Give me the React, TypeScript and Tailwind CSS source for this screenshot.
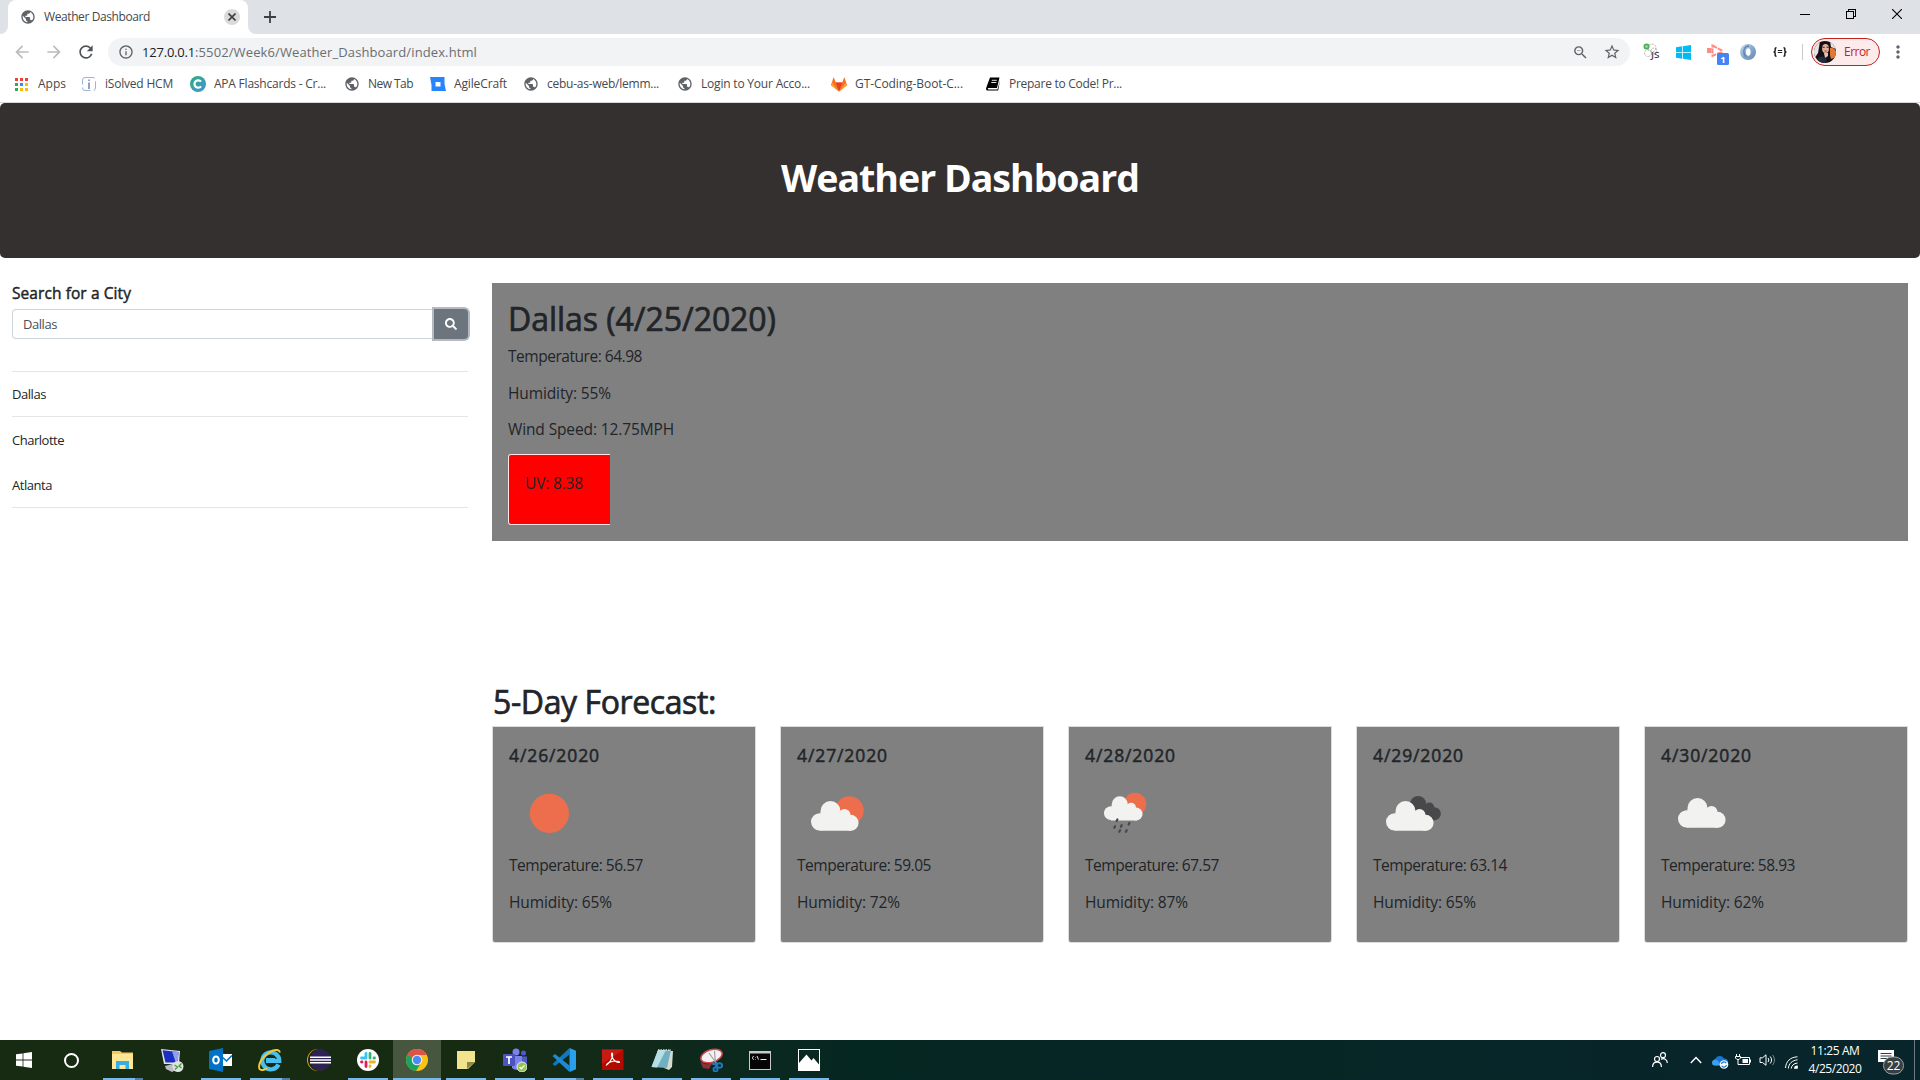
import React, { useLayoutEffect, useRef } from "react";
import {
  MdArrowBack,
  MdArrowForward,
  MdInfoOutline,
  MdMoreVert,
  MdPublic,
  MdRefresh,
  MdStarBorder,
  MdZoomOut,
} from "react-icons/md";
import { FaSearch } from "react-icons/fa";

/* Tracks its text so that it fills exactly `w` pixels on one line. */
function Label({ w, className = "", children }: { w: number; className?: string; children: string }) {
  const ref = useRef<HTMLSpanElement>(null);
  useLayoutEffect(() => {
    const el = ref.current;
    if (!el) return;
    el.style.letterSpacing = "0px";
    const natural = el.getBoundingClientRect().width;
    el.style.letterSpacing = `${(w - natural) / children.length}px`;
  }, [w, children]);
  return (
    <span ref={ref} className={`inline-block shrink-0 whitespace-nowrap ${className}`}>
      {children}
    </span>
  );
}

/* ---------- browser chrome ---------- */

function TabStrip() {
  return (
    <div className="flex h-[34px] items-end bg-[#dee1e6]">
      <div className="h-2 w-2 shrink-0 bg-white">
        <div className="h-2 w-2 rounded-br-lg bg-[#dee1e6]" />
      </div>
      <div className="flex h-[34px] w-[240px] items-center rounded-t-lg bg-white pl-3 pr-2">
        <MdPublic className="size-4 text-[#5f6368]" />
        <Label w={106} className="ml-2 text-[12px] leading-4 text-[#45494d]">Weather Dashboard</Label>
        <div className="ml-auto flex size-4 items-center justify-center rounded-full bg-[#dadada]">
          <svg viewBox="0 0 8 8" className="size-2 stroke-[#3c4043]" strokeWidth="1.6">
            <path d="M.5.5l7 7M7.5.5l-7 7" />
          </svg>
        </div>
      </div>
      <div className="h-2 w-2 shrink-0 bg-white">
        <div className="h-2 w-2 rounded-bl-lg bg-[#dee1e6]" />
      </div>
      <svg viewBox="0 0 12 12" className="mb-[11px] ml-2 size-3 stroke-[#3c4043]" strokeWidth="1.8">
        <path d="M6 0v12M0 6h12" />
      </svg>
      <div className="mb-[15px] ml-auto mr-[18px] flex items-center gap-9">
        <svg viewBox="0 0 10 10" className="size-[10px]" shapeRendering="crispEdges">
          <rect y="5" width="10" height="1" />
        </svg>
        <svg viewBox="0 0 10 10" className="size-[10px] fill-none stroke-black" shapeRendering="crispEdges">
          <path d="M.5 2.5h7v7h-7zM2.5 2V.5h7v7H8" />
        </svg>
        <svg viewBox="0 0 10 10" className="size-[10px] stroke-black" strokeWidth="1.1">
          <path d="M0 0l10 10M10 0L0 10" />
        </svg>
      </div>
    </div>
  );
}

function WindowsLogo({ className }: { className: string }) {
  return (
    <svg viewBox="0 0 16 16" className={className}>
      <path d="M0 2.3L6.6 1.4v6.2H0zM7.4 1.3L16 0v7.6H7.4zM0 8.4h6.6v6.2L0 13.7zM7.4 8.4H16V16l-8.6-1.3z" />
    </svg>
  );
}

function Extensions() {
  return (
    <div className="flex items-center">
      <svg viewBox="0 0 18 18" className="ml-[13px] size-[18px] shrink-0">
        <g fill="none" stroke="#b5b5b5" strokeDasharray="2 1">
          <circle cx="9" cy="5" r="4" />
          <circle cx="5" cy="10" r="3.500" />
          <circle cx="11" cy="8" r="3" />
        </g>
        <circle cx="3.500" cy="3.500" r="3" fill="#4caf50" />
        <circle cx="3.500" cy="3.500" r="1.300" fill="#a5dba7" />
        <text x="8" y="14.500" fontSize="9.500" fontWeight="600" fill="#444" fontFamily="Open Sans, sans-serif" textLength="8.500" lengthAdjust="spacingAndGlyphs">JS</text>
      </svg>
      <WindowsLogo className="ml-[15px] size-[15px] shrink-0 fill-[#00bcf2]" />
      <svg viewBox="0 0 23 22" className="ml-4 mt-[6px] h-[22px] w-[23px] shrink-0">
        <rect x="0" y="4" width="4.500" height="5" fill="#ff8a86" />
        <path d="M5.500 1.500l9 4.800v2l-9 3.400z" fill="none" stroke="#ff8a86" strokeWidth="2" strokeDasharray="5 1" />
        <rect x="10" y="9" width="12" height="12" rx="1.500" fill="#4285f4" />
        <text x="16" y="18.500" fontSize="9.500" fontWeight="700" textAnchor="middle" fill="#fff" fontFamily="Open Sans, sans-serif">1</text>
      </svg>
      <svg viewBox="0 0 16 16" className="ml-[10px] size-4 shrink-0">
        <defs>
          <linearGradient id="swirl" x1="0" y1="0" x2="1" y2="1">
            <stop offset="0" stopColor="#c9dcee" />
            <stop offset=".5" stopColor="#8aa9cc" />
            <stop offset="1" stopColor="#5f86b4" />
          </linearGradient>
        </defs>
        <circle cx="8" cy="8" r="8" fill="url(#swirl)" />
        <path d="M9 2C4 2 2 8 6 13" stroke="#5f86b4" strokeWidth="1.400" fill="none" />
        <ellipse cx="8.300" cy="8" rx="2.300" ry="3.800" fill="#fff" />
      </svg>
      <svg viewBox="0 0 14 10" className="ml-[17px] h-[10px] w-[14px] shrink-0 fill-none stroke-[#222]" strokeWidth="1.500">
        <path d="M3.5.8C1.8.8 2.2 2 2.2 3.2S1.5 5 .5 5c1 0 1.700.600 1.700 1.800s-.4 2.400 1.300 2.400M10.500.8c1.700 0 1.300 1.200 1.300 2.400S12.500 5 13.500 5c-1 0-1.700.600-1.700 1.800s.4 2.400-1.300 2.400" />
        <path d="M4.800 3.500h4.400M4.800 5.500h4.400" strokeWidth="1.200" />
      </svg>
      <div className="ml-[15px] h-4 w-px bg-[#c8cacd]" />
    </div>
  );
}

function Avatar() {
  return (
    <svg viewBox="0 0 22 22" className="size-[22px] shrink-0">
      <clipPath id="face"><circle cx="11" cy="11" r="11" /></clipPath>
      <g clipPath="url(#face)">
        <rect width="22" height="22" fill="#14101a" />
        <path d="M0 0h6L4 12l-4 6z" fill="#e9e4e4" />
        <path d="M16 7c3-1 6 2 6 4v5l-5 2-1-4z" fill="#e07a35" />
        <path d="M16 0h6v8l-5-2z" fill="#efe3df" />
        <ellipse cx="11.500" cy="7.500" rx="3.400" ry="4.500" fill="#e2b19b" />
        <path d="M8.500 6.300h2.200M12.500 6.300h2.200" stroke="#3a2226" strokeWidth="1.100" />
        <path d="M10.500 10h2.200" stroke="#a3394a" />
        <path d="M10 12h4l0 3-3 2z" fill="#e8c3b2" />
        <path d="M3 19c3-5 7-4 10 0l-2 3H5z" fill="#232c38" />
      </g>
    </svg>
  );
}

function Toolbar() {
  return (
    <div className="flex h-9 shrink-0 items-center pl-3">
      <MdArrowBack className="size-5 text-[#babcbe]" />
      <MdArrowForward className="ml-3 size-5 text-[#babcbe]" />
      <MdRefresh className="ml-3 size-5 text-[#50545a]" />
      <div className="ml-3 flex h-7 w-[1522px] items-center rounded-full bg-[#f1f3f4] pl-[10px] pr-[9px]">
        <MdInfoOutline className="size-4 text-[#5f6368]" />
        <Label w={53} className="ml-2 text-[13px] leading-5 text-[#202124]">127.0.0.1</Label>
        <Label w={282} className="text-[13px] leading-5 text-[#6a6e73]">:5502/Week6/Weather_Dashboard/index.html</Label>
        <MdZoomOut className="ml-auto size-[17px] text-[#5f6368]" />
        <MdStarBorder className="ml-[14px] size-[18px] text-[#5f6368]" />
      </div>
      <Extensions />
      <div className="ml-2 flex h-7 w-[69px] items-center rounded-full border border-[#c5221f] bg-[#fcebea] pl-[2px]">
        <Avatar />
        <Label w={26} className="ml-2 text-[12px] leading-5 text-[#c5221f]">Error</Label>
      </div>
      <MdMoreVert className="ml-2 size-5 text-[#5f6368]" />
    </div>
  );
}

const APP_DOTS = [
  "#ea4335", "#ea4335", "#ea4335",
  "#34a853", "#4285f4", "#fbbc05",
  "#34a853", "#fbbc05", "#fbbc05",
];

function Bookmarks() {
  const globe = <MdPublic className="size-4 text-[#5f6368]" />;
  const items = [
    {
      text: "Apps", w: 28, slot: "w-[68px]",
      icon: (
        <svg viewBox="0 0 16 16" className="mr-px size-4" shapeRendering="crispEdges">
          {APP_DOTS.map((c, i) => (
            <rect key={i} x={2 + (i % 3) * 5} y={2 + Math.floor(i / 3) * 5} width="3" height="3" fill={c} />
          ))}
        </svg>
      ),
    },
    {
      text: "iSolved HCM", w: 68, slot: "w-[109px]",
      icon: (
        <svg viewBox="0 0 16 16" className="size-4 fill-none stroke-[#9db4d8]">
          <rect x="1.500" y="1.500" width="13" height="13" rx="2.500" strokeDasharray="10 3" />
          <path d="M8 6.500V13M8 3.500v1.500" stroke="#6a83b5" strokeWidth="1.500" />
        </svg>
      ),
    },
    {
      text: "APA Flashcards - Cr...", w: 112, slot: "w-[154px]",
      icon: (
        <svg viewBox="0 0 16 16" className="size-4">
          <defs>
            <linearGradient id="cram" x1="0" y1="0" x2="1" y2="1">
              <stop offset=".2" stopColor="#2fa98c" />
              <stop offset="1" stopColor="#4592dd" />
            </linearGradient>
          </defs>
          <circle cx="8" cy="8" r="8" fill="url(#cram)" />
          <path d="M11 5.600A3.700 3.700 0 1 0 11 10.400" fill="none" stroke="#fff" strokeWidth="2.200" />
        </svg>
      ),
    },
    { text: "New Tab", w: 45, slot: "w-[86px]", icon: globe },
    {
      text: "AgileCraft", w: 53, slot: "w-[93px]",
      icon: (
        <svg viewBox="0 0 16 16" className="size-4">
          <path d="M1 1h13.500v7L16 15H1.500V9L0 1z" fill="#2684ff" />
          <rect x="5.500" y="6" width="5" height="4.500" fill="#fff" />
        </svg>
      ),
    },
    { text: "cebu-as-web/lemm...", w: 112, slot: "w-[154px]", icon: globe },
    { text: "Login to Your Acco...", w: 109, slot: "w-[154px]", icon: globe },
    {
      text: "GT-Coding-Boot-C...", w: 108, slot: "w-[154px]",
      icon: (
        <svg viewBox="0 0 16 16" className="size-4">
          <path d="M0 9.200L2.600 1l2.200 5.500h6.400L13.400 1 16 9.200 8 15.500z" fill="#fc6d26" />
          <path d="M4.800 6.500h6.400L8 15.500z" fill="#e24329" />
          <path d="M0 9.200l1-2.700L8 15.500zM16 9.200l-1-2.700L8 15.500z" fill="#fca326" />
        </svg>
      ),
    },
    {
      text: "Prepare to Code! Pr...", w: 113, slot: "w-[154px]",
      icon: (
        <svg viewBox="0 0 16 16" className="size-4">
          <path d="M5 1.500h9.500L12 12H3.500c-1 0-1 1.500 0 1.500h9L15 4l-1.800 10.500H2.500C.8 14.500.8 12.500 1.500 11z" />
          <path d="M6.800 4.300h5M6.300 6.500h5" stroke="#fff" strokeWidth=".9" />
        </svg>
      ),
    },
  ];
  return (
    <div className="flex h-[32px] shrink-0 items-center pb-1 pl-3">
      {items.map((b) => (
        <div key={b.text} className={`flex shrink-0 items-center pl-px ${b.slot}`}>
          {b.icon}
          <Label w={b.w} className="ml-2 text-[12px] leading-4 text-[#45494d]">{b.text}</Label>
        </div>
      ))}
    </div>
  );
}

/* ---------- weather drawings ---------- */

function Cloud({ x, y, s = 1, fill = "#f2f2f0" }: { x: number; y: number; s?: number; fill?: string }) {
  return (
    <g transform={`translate(${x} ${y}) scale(${s})`} fill={fill}>
      <circle cx="8.600" cy="20.800" r="8.600" />
      <circle cx="19.500" cy="10" r="10" />
      <circle cx="33.500" cy="14" r="6" />
      <circle cx="39.600" cy="21.800" r="8" />
      <path d="M9.500 11h27l4 5v13.800H8.600z" />
    </g>
  );
}

const DROPS = [[32, 53.300], [29.700, 60], [36.300, 59], [44, 56.700], [34.700, 64], [41.300, 64]];

function Sky({ kind }: { kind: string }) {
  return (
    <svg viewBox="0 0 80 80" className="size-20">
      {kind === "clear" && <circle cx="40.400" cy="46.300" r="19.600" fill="#ec6e4c" />}
      {kind === "few" && (
        <>
          <circle cx="52.400" cy="43.500" r="14.300" fill="#ec6e4c" />
          <Cloud x={14} y={34} />
        </>
      )}
      {kind === "rain" && (
        <>
          <circle cx="50" cy="37" r="11.200" fill="#ec6e4c" />
          <Cloud x={19} y={29.300} s={0.81} />
          {DROPS.map(([x, y], i) => (
            <path key={i} d={`M${x + 0.4} ${y - 0.8}l-.8 1.600`} stroke="#48484a" strokeWidth="2.200" strokeLinecap="round" />
          ))}
        </>
      )}
      {kind === "broken" && (
        <>
          <Cloud x={29.300} y={29} s={0.81} fill="#48484a" />
          <Cloud x={13} y={34} />
        </>
      )}
      {kind === "scattered" && <Cloud x={17} y={31} />}
    </svg>
  );
}

/* ---------- page ---------- */

const FORECAST = [
  { date: "4/26/2020", kind: "clear", temp: "56.57", hum: "65%" },
  { date: "4/27/2020", kind: "few", temp: "59.05", hum: "72%" },
  { date: "4/28/2020", kind: "rain", temp: "67.57", hum: "87%" },
  { date: "4/29/2020", kind: "broken", temp: "63.14", hum: "65%" },
  { date: "4/30/2020", kind: "scattered", temp: "58.93", hum: "62%" },
];

function Sidebar() {
  return (
    <aside className="w-[456px] shrink-0">
      <div className="flex h-[26px] items-start">
        <Label w={119} className="text-[15.5px] leading-5 [-webkit-text-stroke:0.45px_#212529]">Search for a City</Label>
      </div>
      <div className="flex h-[30px]">
        <div className="flex w-[422px] items-center rounded-l border border-r-0 border-[#ced4da] pl-[10px]">
          <Label w={34} className="text-[13px] leading-5 text-[#495057]">Dallas</Label>
        </div>
        <button className="flex w-[34px] items-center justify-center rounded-r bg-[#6c757d] shadow-[0_0_0_2px_#b5babe]">
          <FaSearch className="size-3 text-white" />
        </button>
      </div>
      <div className="mt-8 flex h-[45px] items-center border-t border-[#e5e5e5]">
        <Label w={34} className="text-[13px] leading-5">Dallas</Label>
      </div>
      <div className="flex h-[47px] items-center border-t border-[#e5e5e5]">
        <Label w={52} className="text-[13px] leading-5">Charlotte</Label>
      </div>
      <div className="flex h-[45px] items-center border-b border-[#e5e5e5]">
        <Label w={40} className="text-[13px] leading-5">Atlanta</Label>
      </div>
    </aside>
  );
}

function Page() {
  return (
    <div className="h-[937px] shrink-0 text-[#212529]">
      <header className="flex h-[155px] justify-center rounded-[5px] bg-[#353030] pt-[53px]">
        <h1 className="text-[37.500px] font-bold leading-[44px] text-white">
          <Label w={358}>Weather Dashboard</Label>
        </h1>
      </header>
      <div className="flex pl-3 pt-[25px]">
        <Sidebar />
        <main className="ml-6 w-[1416px]">
          <section className="h-[258px] bg-[#808080] pl-4 pt-4 text-[15.5px]">
            <h2 className="text-[32px] leading-[39px] [-webkit-text-stroke:0.7px_#212529]">
              <Label w={268}>Dallas (4/25/2020)</Label>
            </h2>
            <p className="h-[36.5px] leading-[37px]"><Label w={134}>Temperature: 64.98</Label></p>
            <p className="h-[36.5px] leading-[37px]"><Label w={103}>Humidity: 55%</Label></p>
            <p className="h-[36.5px] leading-[37px]"><Label w={166}>Wind Speed: 12.75MPH</Label></p>
            <div className="mt-[6.5px] h-[71px] w-[102px] rounded-l-[3px] border-y border-l border-white/90 bg-[#ff0000] pl-4 pt-4 leading-6">
              <Label w={58}>UV: 8.38</Label>
            </div>
          </section>
          <section className="pl-px pt-[141px]">
            <h2 className="h-[45px] text-[32px] leading-[39px] [-webkit-text-stroke:0.7px_#212529]">
              <Label w={223}>5-Day Forecast:</Label>
            </h2>
            <div className="flex gap-[26px]">
              {FORECAST.map((d) => (
                <article key={d.date} className="h-[215px] w-[262px] rounded-b-[2px] bg-[#808080] pl-4 pt-4 text-[15.5px] shadow-[0_0_0_1px_#dcdcdc]">
                  <h3 className="text-[17.500px] leading-6 [-webkit-text-stroke:0.5px_#212529]"><Label w={91}>{d.date}</Label></h3>
                  <Sky kind={d.kind} />
                  <p className="h-[36.5px] leading-[37px]"><Label w={134}>{`Temperature: ${d.temp}`}</Label></p>
                  <p className="h-[36.5px] leading-[37px]"><Label w={103}>{`Humidity: ${d.hum}`}</Label></p>
                </article>
              ))}
            </div>
          </section>
        </main>
      </div>
    </div>
  );
}

/* ---------- taskbar ---------- */

const art: Record<string, React.ReactNode> = {
  explorer: (
    <>
      <path d="M1 3h8l2 1.500h11V21H1z" fill="#f5c95b" />
      <path d="M1 6h21v15H1z" fill="#ffe596" />
      <path d="M5 21v-8h13v8h-3.500v-4h-6v4z" fill="#34aee3" />
    </>
  ),
  remote: (
    <>
      <path d="M5 18l11-3 6 4-10 5-6-3z" fill="#b9bcc0" />
      <path d="M1 1l19 2-1 13-15 0z" fill="#dfe3ea" />
      <path d="M2.500 2.200l16 1.800-.8 10.500-12.200 0z" fill="#1a2fc0" />
      <path d="M12 3.300l6.500.7-.8 10.500h-2z" fill="#8f9fee" />
      <circle cx="18" cy="18.500" r="5.500" fill="#dfe5dc" />
      <path d="M14.500 17l3 2-2.500 2.500M21.500 15.500L19 18l2.500 2" fill="none" stroke="#3f9b3f" strokeWidth="1.300" />
    </>
  ),
  outlook: (
    <>
      <path d="M12 6h11v12H12z" fill="#fff" />
      <path d="M12 8l5.500 5L23 7.500" fill="none" stroke="#0072c6" strokeWidth="1.600" />
      <path d="M0 3l14-3v24L0 21z" fill="#0072c6" />
      <ellipse cx="7" cy="12" rx="2.800" ry="3.600" fill="none" stroke="#fff" strokeWidth="2" />
    </>
  ),
  ie: (
    <>
      <path d="M20.500 16.500A8.500 8.500 0 1 1 21.300 12.800H8" fill="none" stroke="#49bff0" strokeWidth="4.200" />
      <path d="M8 10.500h9" stroke="#49bff0" strokeWidth="1" />
      <path d="M22 4.500C20-1 11 3 5 10c-5 6-5.500 13 0 12 1.500-.2 3-1 4-2" fill="none" stroke="#f2c832" strokeWidth="2" />
    </>
  ),
  eclipse: (
    <>
      <circle cx="11" cy="12" r="11" fill="#f7941e" />
      <circle cx="12" cy="12" r="11" fill="#182a12" />
      <circle cx="13.500" cy="12" r="10.500" fill="#2c2255" />
      <path d="M3 9.200h21M3 12h21M3 14.800h21" stroke="#fff" strokeWidth="1.500" />
    </>
  ),
  slack: (
    <>
      <circle cx="12" cy="12" r="11" fill="#fff" />
      <g strokeWidth="2.800" strokeLinecap="round">
        <path d="M10 5.500v4.500M5.500 10H10" stroke="#36c5f0" />
        <path d="M14 5.500V10M18.500 10h-.5" stroke="#2eb67d" />
        <path d="M14 14h4.500M14 18.500V18" stroke="#ecb22e" />
        <path d="M10 14v4.500M5.500 14H6" stroke="#e01e5a" />
      </g>
    </>
  ),
  chrome: (
    <>
      <circle cx="12" cy="12" r="11" fill="#fbc116" />
      <path d="M12 12L2.500 6.500A11 11 0 0 0 11 23l5.500-9z" fill="#1aa260" />
      <path d="M12 12L2.400 6.600A11 11 0 0 1 21.700 7H12z" fill="#de5246" />
      <circle cx="12" cy="12" r="5.300" fill="#f1f1f1" />
      <circle cx="12" cy="12" r="4.200" fill="#4c8bf5" />
    </>
  ),
  sticky: (
    <>
      <path d="M3 3h18v11l-7 7H3z" fill="#f2e48f" />
      <path d="M21 14l-8 0v7z" fill="#8d8747" />
    </>
  ),
  teams: (
    <>
      <circle cx="13" cy="4" r="3.500" fill="#7b83eb" />
      <circle cx="20.500" cy="5" r="2.500" fill="#5059c9" />
      <path d="M9 8h10v9a6 6 0 0 1-10 3z" fill="#7b83eb" />
      <path d="M19 8.500h5v7a4 4 0 0 1-5 3z" fill="#5059c9" />
      <rect x="0" y="6" width="12" height="12" rx="1" fill="#4b53bc" />
      <path d="M3 9h6M6 9v7" stroke="#fff" strokeWidth="1.700" />
      <circle cx="19" cy="19" r="5" fill="#92c353" stroke="#fff" strokeWidth=".8" />
      <path d="M16.500 19l1.800 1.800 3.200-3.300" fill="none" stroke="#fff" strokeWidth="1.300" />
    </>
  ),
  vscode: (
    <>
      <path d="M17.500 0v6.500L3 18 .5 16z" fill="#1277bd" />
      <path d="M17.500 24v-6.500L3 6 .5 8z" fill="#1f8ad2" />
      <path d="M17.500 0L24 2.800v18.400L17.500 24z" fill="#2aa0ea" />
    </>
  ),
  pdf: (
    <>
      <rect x="1" y="1.500" width="21.500" height="20.500" fill="#b30b00" />
      <path d="M1 1.500h21.500L1 16z" fill="#c81a10" />
      <path d="M5.500 17c2-1 7-7 6-11.500-.8-1.500-1.600 1-.3 3.800 1.400 3.200 5 5.700 7 5.200 1.500-1-3.500-1.800-6-1.200-3 .7-6.500 2.200-6.700 3.700z" fill="none" stroke="#fff" strokeWidth="1.100" />
    </>
  ),
  notepad: (
    <>
      <path d="M7 3h16l-1 16-3 3-5-2z" fill="#d8d9cf" />
      <path d="M8 2h13l-4 18-15.500-1z" fill="#6fb0c2" />
      <path d="M8 2h8L7 19.500l-5.500-.5z" fill="#b7dde5" />
      <path d="M8 2h13" stroke="#ddd" strokeWidth="1.500" strokeDasharray="1.500 1" />
    </>
  ),
  snip: (
    <>
      <path d="M1 13c3 4 9 4 13 1l-4 7-6-1z" fill="#8d3037" />
      <ellipse cx="12.500" cy="8" rx="11" ry="6.200" fill="#f6f1f1" stroke="#d0474f" strokeWidth="1.600" transform="rotate(-18 12.500 8)" />
      <path d="M10 5l8 11M15.500 3l1 13" stroke="#9ba1a8" strokeWidth="1.200" />
      <g fill="none" stroke="#1d79b8" strokeWidth="1.900">
        <ellipse cx="20.500" cy="17.500" rx="2.600" ry="2.200" />
        <ellipse cx="16.500" cy="21.500" rx="2" ry="2" />
        <path d="M13 15.500l5.500 1.500M17.500 14l-.5 6" />
      </g>
    </>
  ),
  cmd: (
    <>
      <rect x="1" y="3" width="22" height="19" fill="#c9c9c9" />
      <rect x="2" y="5.500" width="20" height="15.500" fill="#050505" />
      <path d="M6 8.500c-2-.8-2 3.500 0 2.800M7.500 9v.5M7.500 11v.5M9 8l1.500 3.500M12.500 11.500h6" stroke="#eee" fill="none" />
    </>
  ),
  photos: (
    <>
      <rect x="1.500" y="1.500" width="21" height="21" fill="none" stroke="#fff" />
      <path d="M2 22v-7l7.500-8.500 5 6 2-2.500L22 16.500V22z" fill="#fff" />
    </>
  ),
};

const APPS = [
  { id: "explorer", open: true, many: true },
  { id: "remote" },
  { id: "outlook", open: true },
  { id: "ie", open: true, many: true },
  { id: "eclipse" },
  { id: "slack", open: true },
  { id: "chrome", active: true },
  { id: "sticky", open: true },
  { id: "teams", open: true },
  { id: "vscode", open: true, many: true },
  { id: "pdf", open: true },
  { id: "notepad", open: true },
  { id: "snip", open: true },
  { id: "cmd", open: true },
  { id: "photos", open: true },
];

function Tray() {
  return (
    <div className="ml-auto flex items-center text-white">
      <svg viewBox="0 0 16 16" className="size-4 fill-none stroke-white" strokeWidth="1.200">
        <circle cx="5" cy="7" r="2.500" />
        <path d="M.6 15c0-6.500 8.800-6.500 8.800 0" />
        <circle cx="11" cy="3.200" r="2.500" />
        <path d="M9 7.200c3-1.700 6.300.3 6.300 3.800" />
      </svg>
      <svg viewBox="0 0 12 8" className="ml-[22px] h-2 w-3 fill-none stroke-white" strokeWidth="1.500">
        <path d="M.8 7L6 1.500 11.200 7" />
      </svg>
      <svg viewBox="0 0 17 14" className="ml-[10px] mt-1 h-[14px] w-[17px]">
        <path d="M3.500 10.500a3.500 3.500 0 0 1-.3-6.500A5 5 0 0 1 12 3.500a3.500 3.500 0 0 1 3 6z" fill="#1677d2" />
        <path d="M0 8a3.200 3.200 0 0 1 5-3l5 5.500H3A2.700 2.700 0 0 1 0 8z" fill="#3aa0f0" />
        <circle cx="12" cy="9.500" r="4.300" fill="#fff" />
        <path d="M9.500 9a2.600 2.600 0 0 1 4.800-.8M14.500 10a2.600 2.600 0 0 1-4.800.8" stroke="#1677d2" fill="none" strokeWidth="1.200" />
      </svg>
      <svg viewBox="0 0 17 12" className="ml-[6px] h-3 w-[17px] fill-none stroke-white">
        <path d="M5.500 3.500h9v7h-8M15.500 5.500v3" />
        <path d="M7.500 5h5.500v4H7.500z" fill="#fff" stroke="none" />
        <path d="M1.500 0v2.500M4.500 0v2.500M.5 2.500h5V4L4 5.500H2L.5 4zM3 5.500v5h4" />
      </svg>
      <svg viewBox="0 0 17 14" className="ml-[7px] h-[14px] w-[17px] fill-none stroke-white">
        <path d="M1 4.800h2.500L7 1.800v10.500L3.500 9.500H1z" />
        <path d="M9 5c1 1.200 1 2.800 0 4M11.200 3.500c1.800 2 1.800 5 0 7" />
        <path d="M13.500 2c2.600 3 2.600 7 0 10" opacity=".45" />
      </svg>
      <svg viewBox="0 0 13 13" className="ml-[9px] mt-1 size-[13px] fill-none stroke-white" strokeWidth="1">
        <path d="M.5 12C1 5.500 5 1.200 12.500.8M3.300 12.500C3.800 7.500 7 4.500 12.500 3.800M6.200 12.500C6.600 9.500 8.800 7.400 12.500 7" />
        <path d="M9 12.800a3.500 3.500 0 0 1 3.800-3.300v3.300z" fill="#fff" stroke="none" />
      </svg>
      <div className="ml-[10px] flex w-[54px] flex-col items-center text-[12px] leading-[18px]">
        <Label w={49}>11:25 AM</Label>
        <Label w={53}>4/25/2020</Label>
      </div>
      <svg viewBox="0 0 27 28" className="ml-4 mt-[3px] h-7 w-[27px]">
        <path d="M0 2h16v12H9.500L6 17.500V14H0z" fill="#fff" />
        <path d="M2.500 5.500h11M2.500 8h11M2.500 10.500h8" stroke="#2a3d40" />
        <rect x="5.500" y="9" width="20" height="17" rx="8.500" fill="#373f42" stroke="#9ba1a3" />
        <text x="15.500" y="21.800" fontSize="12" textAnchor="middle" fill="#fff" fontFamily="Open Sans, sans-serif">22</text>
      </svg>
      <div className="ml-[9px] mr-[5px] h-10 w-px bg-[#6b7b7d]" />
    </div>
  );
}

function Taskbar() {
  return (
    <footer className="flex h-10 shrink-0 items-center bg-linear-to-r from-[#172b13] from-25% via-[#052722] via-45% to-[#08252c]">
      <div className="flex w-12 justify-center"><WindowsLogo className="size-4 fill-white" /></div>
      <div className="flex w-[50px] justify-center pr-[3px]">
        <div className="size-[15px] rounded-full border-2 border-white" />
      </div>
      {APPS.map((a) => (
        <div key={a.id} className="flex h-10 w-[49px] flex-col items-center">
          <div className={`flex h-[38px] w-12 items-center justify-center pt-[2px] ${a.active ? "bg-[#46563f]" : ""}`}>
            <svg viewBox="0 0 24 24" className="size-6">{art[a.id]}</svg>
          </div>
          {a.active && <div className="h-[2px] w-12 bg-[#76b9ed]" />}
          {a.open && (
            <div className="flex h-[2px] w-10 bg-[#76b9ed]">
              {a.many && <div className="ml-auto h-[2px] w-2 bg-[#4f7fa3]" />}
            </div>
          )}
        </div>
      ))}
      <Tray />
    </footer>
  );
}

export default function App() {
  return (
    <div className="flex h-[1080px] w-[1920px] flex-col overflow-hidden bg-white font-['Open_Sans','Noto_Sans',sans-serif]">
      <TabStrip />
      <Toolbar />
      <Bookmarks />
      <div className="h-px shrink-0 bg-[#d8dadd]" />
      <Page />
      <Taskbar />
    </div>
  );
}
